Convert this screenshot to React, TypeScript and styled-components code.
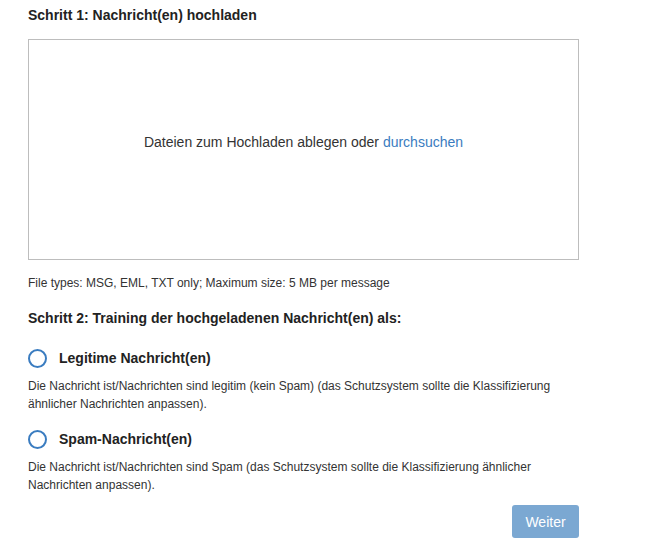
import React, { useState } from "react";
import styled, { createGlobalStyle } from "styled-components";

const GlobalStyle = createGlobalStyle`
  html, body {
    margin: 0;
    padding: 0;
    background: #ffffff;
  }
  body {
    font-family: "Liberation Sans", Arial, sans-serif;
    color: #333333;
  }
`;

const Page = styled.div`
  width: 551px;
  padding: 6px 0 0 28px;
`;

const StepTitle = styled.h2<{ $gap?: number }>`
  margin: ${({ $gap }) => $gap ?? 0}px 0 0;
  font-size: 14px;
  line-height: 18px;
  font-weight: 700;
  color: #222222;
`;

const DropZone = styled.div`
  box-sizing: border-box;
  margin-top: 15px;
  height: 221px;
  padding-bottom: 16px;
  border: 1px solid #bdbdbd;
  display: flex;
  align-items: center;
  justify-content: center;
  font-size: 14px;
  color: #333333;
`;

const BrowseLink = styled.a`
  color: #3a7cc0;
  text-decoration: none;
  cursor: pointer;
`;

const Hint = styled.p`
  margin: 15px 0 0;
  font-size: 12px;
  line-height: 16px;
  color: #333333;
`;

const Option = styled.div<{ $gap: number }>`
  margin-top: ${({ $gap }) => $gap}px;
`;

const OptionRow = styled.label`
  display: flex;
  align-items: center;
  gap: 12px;
  height: 20px;
  cursor: pointer;
`;

const RadioCircle = styled.span<{ $checked: boolean }>`
  box-sizing: border-box;
  width: 19px;
  height: 19px;
  border-radius: 50%;
  border: 2px solid #3a7cc0;
  background: #ffffff;
  display: flex;
  align-items: center;
  justify-content: center;

  &::after {
    content: "";
    width: 9px;
    height: 9px;
    border-radius: 50%;
    background: ${({ $checked }) => ($checked ? "#3a7cc0" : "transparent")};
  }
`;

const OptionLabel = styled.span`
  font-size: 14px;
  font-weight: 700;
  color: #222222;
`;

const OptionText = styled.p`
  margin: 9px 0 0;
  font-size: 12px;
  line-height: 18px;
  color: #333333;
`;

const Footer = styled.div`
  display: flex;
  justify-content: flex-end;
  margin-top: 11px;
`;

const NextButton = styled.button`
  width: 67px;
  height: 33px;
  border: none;
  border-radius: 3px;
  background: #7ba8d2;
  color: #ffffff;
  font-family: "Liberation Sans", Arial, sans-serif;
  font-size: 14px;
  cursor: not-allowed;
`;

const options = [
  {
    key: "legit",
    label: "Legitime Nachricht(en)",
    text: "Die Nachricht ist/Nachrichten sind legitim (kein Spam) (das Schutzsystem sollte die Klassifizierung ähnlicher Nachrichten anpassen).",
    gap: 21,
  },
  {
    key: "spam",
    label: "Spam-Nachricht(en)",
    text: "Die Nachricht ist/Nachrichten sind Spam (das Schutzsystem sollte die Klassifizierung ähnlicher Nachrichten anpassen).",
    gap: 16,
  },
];

export default function App() {
  const [choice, setChoice] = useState<string | null>(null);

  return (
    <>
      <GlobalStyle />
      <Page>
        <StepTitle>Schritt 1: Nachricht(en) hochladen</StepTitle>
        <DropZone>
          <span>
            Dateien zum Hochladen ablegen oder <BrowseLink>durchsuchen</BrowseLink>
          </span>
        </DropZone>
        <Hint>File types: MSG, EML, TXT only; Maximum size: 5 MB per message</Hint>

        <StepTitle $gap={18}>Schritt 2: Training der hochgeladenen Nachricht(en) als:</StepTitle>

        {options.map((opt) => (
          <Option key={opt.key} $gap={opt.gap}>
            <OptionRow onClick={() => setChoice(opt.key)}>
              <RadioCircle $checked={choice === opt.key} />
              <OptionLabel>{opt.label}</OptionLabel>
            </OptionRow>
            <OptionText>{opt.text}</OptionText>
          </Option>
        ))}

        <Footer>
          <NextButton type="button" disabled={!choice}>
            Weiter
          </NextButton>
        </Footer>
      </Page>
    </>
  );
}
